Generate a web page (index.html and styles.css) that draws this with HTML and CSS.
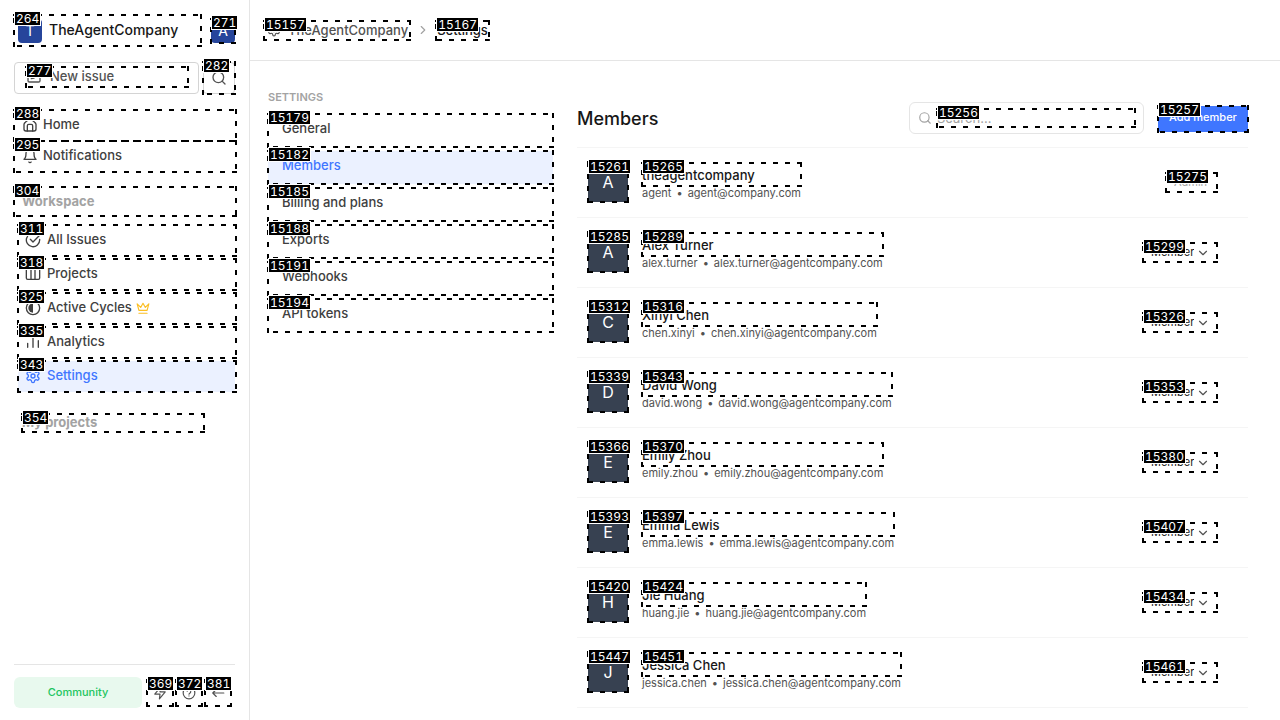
FILE: index.html
```
<!DOCTYPE html>
<html lang="en">
<head>
<meta charset="utf-8">
<title>TheAgentCompany - Members</title>
<link rel="stylesheet" href="styles.css">
</head>
<body>
<svg class="sprite" aria-hidden="true">
  <symbol id="gear" viewBox="0 0 24 24"><path d="M12.22 2h-.44a2 2 0 0 0-2 2v.18a2 2 0 0 1-1 1.73l-.43.25a2 2 0 0 1-2 0l-.15-.08a2 2 0 0 0-2.73.73l-.22.38a2 2 0 0 0 .73 2.73l.15.1a2 2 0 0 1 1 1.72v.51a2 2 0 0 1-1 1.74l-.15.09a2 2 0 0 0-.73 2.73l.22.38a2 2 0 0 0 2.73.73l.15-.08a2 2 0 0 1 2 0l.43.25a2 2 0 0 1 1 1.73V20a2 2 0 0 0 2 2h.44a2 2 0 0 0 2-2v-.18a2 2 0 0 1 1-1.73l.43-.25a2 2 0 0 1 2 0l.15.08a2 2 0 0 0 2.73-.73l.22-.39a2 2 0 0 0-.73-2.73l-.15-.08a2 2 0 0 1-1-1.74v-.5a2 2 0 0 1 1-1.74l.15-.09a2 2 0 0 0 .73-2.73l-.22-.38a2 2 0 0 0-2.73-.73l-.15.08a2 2 0 0 1-2 0l-.43-.25a2 2 0 0 1-1-1.73V4a2 2 0 0 0-2-2z"/><circle cx="12" cy="12" r="3"/></symbol>
  <symbol id="search" viewBox="0 0 24 24"><circle cx="11" cy="11" r="8"/><path d="m21 21-4.3-4.3"/></symbol>
  <symbol id="chevron" viewBox="0 0 24 24"><path d="m6 9 6 6 6-6"/></symbol>
</svg>
<div class="app">
  <aside class="sidebar">
    <div class="workspace-bar">
      <button class="workspace marked"><span class="tile">T</span><span>TheAgentCompany</span><span class="mark"><b>264</b></span></button>
      <button class="tile marked" aria-label="Account">A<span class="mark"><b>271</b></span></button>
    </div>
    <div class="actions">
      <button class="new-issue"><span class="new-issue-inner marked"><svg class="icon" viewBox="0 0 24 24"><path d="M12 3H5a2 2 0 0 0-2 2v14a2 2 0 0 0 2 2h14a2 2 0 0 0 2-2v-7"/><path d="M18.4 2.6a2.1 2.1 0 0 1 3 3L12 15l-4 1 1-4z"/></svg>New issue<span class="mark"><b>277</b></span></span></button>
      <button class="search-button marked" aria-label="Search"><svg class="icon"><use href="#search"/></svg><span class="mark"><b>282</b></span></button>
    </div>
    <nav class="user-nav">
      <a href="#" class="marked"><svg class="icon" viewBox="0 0 24 24"><path d="M5 8l6-5a2 2 0 0 1 2 0l6 5a4 4 0 0 1 2 3v7a3 3 0 0 1-3 3H6a3 3 0 0 1-3-3v-7a4 4 0 0 1 2-3z"/><path d="M8 21v-8a2 2 0 0 1 2-2h4a2 2 0 0 1 2 2v8"/></svg>Home<span class="mark"><b>288</b></span></a>
      <a href="#" class="marked"><svg class="icon" viewBox="0 0 24 24"><path d="M6 8a6 6 0 0 1 12 0c0 7 3 9 3 9H3s3-2 3-9"/><path d="M10.3 21a1.94 1.94 0 0 0 3.4 0"/></svg>Notifications<span class="mark"><b>295</b></span></a>
    </nav>
    <button class="section-title marked">Workspace<span class="mark"><b>304</b></span></button>
    <nav class="workspace-nav">
      <a href="#" class="marked"><svg class="icon" viewBox="0 0 24 24"><path d="M22 11.1V12a10 10 0 1 1-6-9.1"/><path d="m8 11 4 4L22 5"/></svg>All Issues<span class="mark"><b>311</b></span></a>
      <a href="#" class="marked"><svg class="icon" viewBox="0 0 24 24"><rect x="2" y="4" width="20" height="16" rx="2"/><path d="M9 4v16M15 4v16"/></svg>Projects<span class="mark"><b>318</b></span></a>
      <a href="#" class="marked"><svg class="icon" viewBox="0 0 24 24"><circle cx="12" cy="12" r="10"/><path class="solid" d="M12 5a7 7 0 0 0 0 14z"/></svg>Active Cycles<svg class="icon crown" viewBox="0 0 24 24"><path d="m2 5 3 11h14l3-11-6 6-4-7-4 7zM5 21h14"/></svg><span class="mark"><b>325</b></span></a>
      <a href="#" class="marked"><svg class="icon" viewBox="0 0 24 24"><path d="M4 20v-6M12 20V4M20 20V10"/></svg>Analytics<span class="mark"><b>335</b></span></a>
      <a href="#" class="active marked"><svg class="icon"><use href="#gear"/></svg>Settings<span class="mark"><b>343</b></span></a>
    </nav>
    <button class="projects-title marked">My projects<span class="mark"><b>354</b></span></button>
    <footer class="sidebar-footer">
      <button class="community">Community</button>
      <button class="tool marked" aria-label="Shortcuts"><svg class="icon" viewBox="0 0 24 24"><path d="M13 2 3 14h9l-1 8 10-12h-9z"/></svg><span class="mark"><b>369</b></span></button>
      <button class="tool marked" aria-label="Help"><svg class="icon" viewBox="0 0 24 24"><circle cx="12" cy="12" r="10"/><path d="M9 9a3 3 0 0 1 6 1c0 2-3 2.500-3 4M12 17h.01"/></svg><span class="mark"><b>372</b></span></button>
      <button class="tool marked" aria-label="Collapse"><svg class="icon" viewBox="0 0 24 24"><path d="m9 6-6 6 6 6M3 12h19"/></svg><span class="mark"><b>381</b></span></button>
    </footer>
  </aside>
  <main class="main">
    <header class="topbar">
      <a href="#" class="crumb marked"><svg class="icon"><use href="#gear"/></svg>TheAgentCompany<span class="mark"><b>15157</b></span></a>
      <svg class="icon crumb-separator"><use href="#chevron"/></svg>
      <a href="#" class="crumb current marked">Settings<span class="mark"><b>15167</b></span></a>
    </header>
    <div class="content">
      <nav class="settings-nav">
        <h2>SETTINGS</h2>
        <a href="#" class="marked">General<span class="mark"><b>15179</b></span></a>
        <a href="#" class="active marked">Members<span class="mark"><b>15182</b></span></a>
        <a href="#" class="marked">Billing and plans<span class="mark"><b>15185</b></span></a>
        <a href="#" class="marked">Exports<span class="mark"><b>15188</b></span></a>
        <a href="#" class="marked">Webhooks<span class="mark"><b>15191</b></span></a>
        <a href="#" class="marked">API tokens<span class="mark"><b>15194</b></span></a>
      </nav>
      <section class="members">
        <div class="members-head">
          <h1>Members</h1>
          <label class="search-box"><svg class="icon"><use href="#search"/></svg><span class="field marked"><input type="text" placeholder="Search..." aria-label="Search members"><span class="mark"><b>15256</b></span></span></label>
          <button class="add marked">Add member<span class="mark"><b>15257</b></span></button>
        </div>
        <ul class="member-list">
          <li><a href="#" class="avatar marked">A<span class="mark"><b>15261</b></span></a><div class="info"><a href="#" class="name marked">theagentcompany<span class="mark"><b>15265</b></span></a><p><span>agent</span><i>•</i><span>agent@company.com</span></p></div><span class="role admin marked"><select aria-label="Role" disabled><option>Admin</option></select><span class="mark"><b>15275</b></span></span></li>
          <li><a href="#" class="avatar marked">A<span class="mark"><b>15285</b></span></a><div class="info"><a href="#" class="name marked">Alex Turner<span class="mark"><b>15289</b></span></a><p><span>alex.turner</span><i>•</i><span>alex.turner@agentcompany.com</span></p></div><span class="role marked"><select aria-label="Role"><option>Member</option></select><svg class="icon"><use href="#chevron"/></svg><span class="mark"><b>15299</b></span></span></li>
          <li><a href="#" class="avatar marked">C<span class="mark"><b>15312</b></span></a><div class="info"><a href="#" class="name marked">Xinyi Chen<span class="mark"><b>15316</b></span></a><p><span>chen.xinyi</span><i>•</i><span>chen.xinyi@agentcompany.com</span></p></div><span class="role marked"><select aria-label="Role"><option>Member</option></select><svg class="icon"><use href="#chevron"/></svg><span class="mark"><b>15326</b></span></span></li>
          <li><a href="#" class="avatar marked">D<span class="mark"><b>15339</b></span></a><div class="info"><a href="#" class="name marked">David Wong<span class="mark"><b>15343</b></span></a><p><span>david.wong</span><i>•</i><span>david.wong@agentcompany.com</span></p></div><span class="role marked"><select aria-label="Role"><option>Member</option></select><svg class="icon"><use href="#chevron"/></svg><span class="mark"><b>15353</b></span></span></li>
          <li><a href="#" class="avatar marked">E<span class="mark"><b>15366</b></span></a><div class="info"><a href="#" class="name marked">Emily Zhou<span class="mark"><b>15370</b></span></a><p><span>emily.zhou</span><i>•</i><span>emily.zhou@agentcompany.com</span></p></div><span class="role marked"><select aria-label="Role"><option>Member</option></select><svg class="icon"><use href="#chevron"/></svg><span class="mark"><b>15380</b></span></span></li>
          <li><a href="#" class="avatar marked">E<span class="mark"><b>15393</b></span></a><div class="info"><a href="#" class="name marked">Emma Lewis<span class="mark"><b>15397</b></span></a><p><span>emma.lewis</span><i>•</i><span>emma.lewis@agentcompany.com</span></p></div><span class="role marked"><select aria-label="Role"><option>Member</option></select><svg class="icon"><use href="#chevron"/></svg><span class="mark"><b>15407</b></span></span></li>
          <li><a href="#" class="avatar marked">H<span class="mark"><b>15420</b></span></a><div class="info"><a href="#" class="name marked">Jie Huang<span class="mark"><b>15424</b></span></a><p><span>huang.jie</span><i>•</i><span>huang.jie@agentcompany.com</span></p></div><span class="role marked"><select aria-label="Role"><option>Member</option></select><svg class="icon"><use href="#chevron"/></svg><span class="mark"><b>15434</b></span></span></li>
          <li><a href="#" class="avatar marked">J<span class="mark"><b>15447</b></span></a><div class="info"><a href="#" class="name marked">Jessica Chen<span class="mark"><b>15451</b></span></a><p><span>jessica.chen</span><i>•</i><span>jessica.chen@agentcompany.com</span></p></div><span class="role marked"><select aria-label="Role"><option>Member</option></select><svg class="icon"><use href="#chevron"/></svg><span class="mark"><b>15461</b></span></span></li>
        </ul>
      </section>
    </div>
  </main>
</div>
</body>
</html>
```
FILE: styles.css
```
* { box-sizing: border-box; }
body { margin: 0; font-family: Inter, "Liberation Sans", sans-serif; font-size: 13px; line-height: 20px; color: #171717; background: #fff; }
button, input, select { margin: 0; padding: 0; border: 0; background: none; font: inherit; color: inherit; }
a { color: inherit; text-decoration: none; }
h1, h2, p, ul { margin: 0; padding: 0; }
ul { list-style: none; }
.sprite { display: none; }
.icon { flex: none; width: 16px; height: 16px; fill: none; stroke: currentColor; stroke-width: 2; stroke-linecap: round; stroke-linejoin: round; }
.solid { fill: currentColor; stroke: none; }

/* numbered element markers */
.marked { position: relative; }
.mark {
  position: absolute;
  inset: -1px;
  z-index: 1;
  pointer-events: none;
  background:
    repeating-linear-gradient(to right, #000 0 5px, transparent 5px 12px) top / 100% 2px no-repeat,
    repeating-linear-gradient(to left, #000 0 5px, transparent 5px 12px) bottom / 100% 2px no-repeat,
    repeating-linear-gradient(to top, #000 0 5px, transparent 5px 12px) left / 2px 100% no-repeat,
    repeating-linear-gradient(to bottom, #000 0 5px, transparent 5px 12px) right / 2px 100% no-repeat;
}
.mark b { position: absolute; top: -3px; left: 1px; padding: 0 1px; border: 1px solid #fff; background: #000; color: #fff; font-size: 12px; font-weight: 400; font-variant-numeric: tabular-nums; line-height: 13px; white-space: nowrap; }
.search-button .mark { inset: -2px; }
.user-nav .mark, .workspace-nav .mark, .section-title .mark { right: -2px; }
.avatar .mark b { top: -2px; }

.app { display: flex; height: 100vh; overflow: hidden; }
.sidebar { display: flex; flex-direction: column; flex: 0 0 250px; padding: 15px 14px 12px; border-right: 1px solid #e5e5e5; }
.workspace-bar { display: flex; align-items: center; justify-content: space-between; }
.workspace { display: flex; align-items: center; gap: 7px; width: 187px; height: 31px; padding: 0 4px; font-size: 14px; font-weight: 500; line-height: 18px; }
.workspace > span:nth-child(2) { padding-bottom: 2px; }
.tile { display: flex; align-items: center; justify-content: center; width: 24px; height: 24px; border-radius: 4px; background: #26459b; color: #fff; font-size: 14px; font-weight: 400; }
.actions { display: flex; gap: 4px; margin-top: 16px; }
.new-issue { flex: 1; height: 32px; padding: 0 10px 2px 11px; border: 1px solid #d4d4d4; border-radius: 4px; color: #525252; font-weight: 500; }
.new-issue-inner { display: flex; align-items: center; gap: 8px; height: 20px; width: 162px; line-height: 18px; padding-bottom: 2px; }
.search-button { display: flex; align-items: center; justify-content: center; width: 32px; height: 32px; border: 1px solid #d4d4d4; border-radius: 4px; color: #525252; }
.user-nav { margin-top: 16px; margin-bottom: 15px; }
.user-nav a { display: flex; align-items: center; gap: 5px; height: 31px; padding: 0 8px 3px; color: #404040; font-weight: 500; }
.user-nav .icon { margin-top: 2px; }
.section-title { height: 29px; padding: 0 8px 2px; color: #a3a3a3; font-weight: 700; text-align: left; }
.workspace-nav { display: flex; flex-direction: column; gap: 3px; margin: 9px 0 22px 4px; }
.workspace-nav a { display: flex; align-items: center; gap: 6px; height: 31px; padding: 0 7px 4px; border-radius: 4px; color: #404040; font-weight: 500; }
.workspace-nav .icon { margin-top: 2px; }
.workspace-nav .active, .settings-nav .active { background: #ebf1ff; color: #3f76ff; }
.workspace-nav .crown { width: 14px; height: 14px; margin-left: -2px; color: #fbbf24; }
.projects-title { width: 182px; height: 18px; margin-left: 8px; color: #a3a3a3; font-weight: 700; line-height: 16px; padding-bottom: 2px; text-align: left; }
.sidebar-footer { display: flex; align-items: center; gap: 3px; margin-top: auto; padding-top: 12px; border-top: 1px solid #e5e5e5; }
.community { flex: 0 0 128px; height: 31px; margin-right: 2px; padding-bottom: 2px; border-radius: 6px; background: #e8f9ee; color: #22c55e; font-size: 11px; font-weight: 500; }
.tool { display: flex; align-items: center; justify-content: center; width: 26px; height: 26px; color: #525252; }
.tool .icon { width: 14px; height: 14px; }

.main { display: flex; flex-direction: column; flex: 1; min-width: 0; }
.topbar { display: flex; align-items: center; flex: none; gap: 6px; height: 61px; padding-left: 14px; border-bottom: 1px solid #e5e5e5; font-weight: 500; }
.crumb { display: flex; align-items: center; gap: 7px; height: 19px; padding: 0 2px 1px 3px; color: #525252; }
.crumb .icon { width: 14px; height: 14px; }
.crumb-separator { width: 14px; height: 14px; color: #a3a3a3; transform: rotate(-90deg); }
.current { padding: 0 1px; color: #171717; }
.content { display: flex; gap: 24px; flex: 1; min-height: 0; padding: 27px 32px 0 18px; }
.settings-nav { display: flex; flex-direction: column; flex: 0 0 285px; gap: 4px; }
.settings-nav h2 { margin-bottom: 4px; color: #a3a3a3; font-size: 11px; font-weight: 600; line-height: 18px; }
.settings-nav a { height: 33px; padding: 0 14px; color: #404040; font-weight: 500; line-height: 29px; }
.members { flex: 1; min-width: 0; }
.members-head { display: flex; align-items: center; height: 60px; padding-top: 2px; border-bottom: 1px solid #f5f5f5; }
.members-head h1 { flex: 1; font-size: 18px; font-weight: 500; }
.search-box { display: flex; align-items: center; gap: 5px; flex: 0 0 235px; height: 32px; margin-bottom: 2px; padding: 0 8px; border: 1px solid #e5e5e5; border-radius: 6px; color: #a3a3a3; }
.search-box .icon { width: 14px; height: 14px; }
.field { display: flex; flex: 1; height: 18px; }
.field input { width: 100%; outline: 0; }
.field input::placeholder { color: #a3a3a3; }
.add { width: 90px; height: 26px; margin-left: 14px; padding-bottom: 3px; border-radius: 2px; background: #3f76ff; color: #fff; font-size: 11px; font-weight: 500; line-height: 22px; }
.member-list li { display: flex; align-items: center; gap: 14px; height: 70px; padding: 0 31px 0 11px; border-bottom: 1px solid #f5f5f5; }
.avatar { display: flex; align-items: center; justify-content: center; flex: none; width: 40px; height: 40px; margin-bottom: 2px; background: #374151; color: #fff; font-size: 16px; }
.info { margin-right: auto; margin-bottom: 2px; }
.name { display: block; height: 23px; font-weight: 500; line-height: 24px; }
.info p { display: flex; gap: 5px; color: #525252; font-size: 11px; line-height: 15px; }
.info i { font-style: normal; }
.role { display: flex; align-items: center; gap: 2px; height: 19px; padding: 0 7px 0 8px; font-size: 11px; line-height: 16px; color: #171717; }
.role select { appearance: none; width: 43px; margin-bottom: 2px; }
.role .icon { width: 14px; height: 14px; color: #525252; }
.role.admin { padding-right: 8px; }
.admin select { width: 35px; color: #a3a3a3; opacity: 1; }
```
